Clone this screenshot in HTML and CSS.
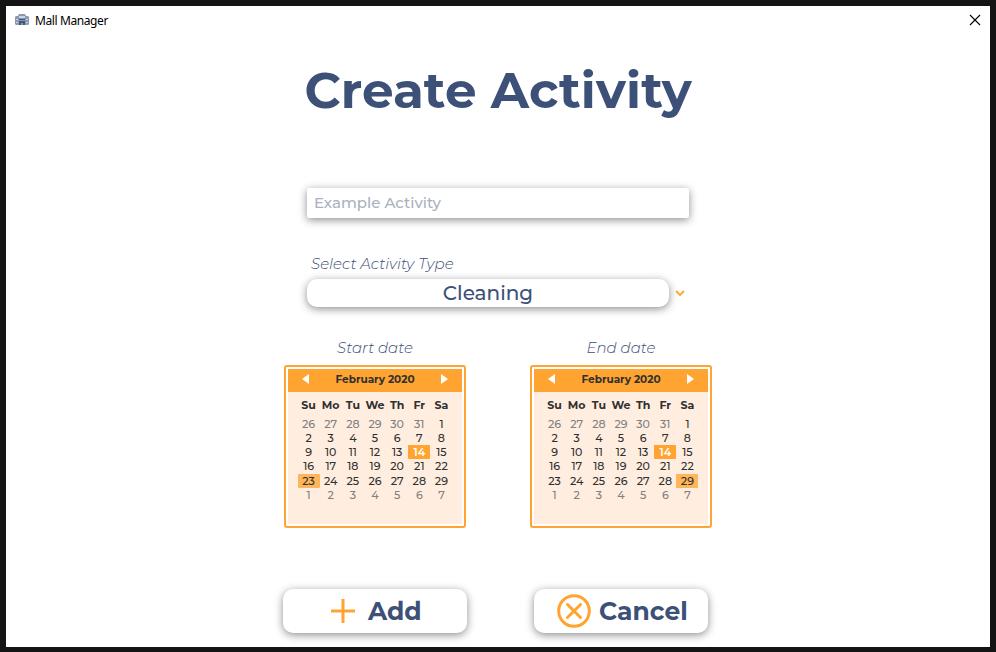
FILE: index.html
```html
<!DOCTYPE html>
<html lang="en">
<head>
<meta charset="utf-8">
<title>Mall Manager</title>
<link rel="stylesheet" href="styles.css">
</head>
<body>
<div class="window">
  <header class="titlebar">
    <svg class="app-icon" width="14" height="12" viewBox="0 0 14 12"><path fill="#8b98b1" d="M0 3l1-1h2l1-2h6l1 2h2l1 1v7l-1 1H1l-1-1z"/><path fill="#c9d5e5" d="M4 2h6v2H4zM1 5h2v1H1zm10 0h2v1h-2zM1 8h2v1H1zm10 0h2v1h-2z"/><path fill="#455779" d="M4 5h6v1H4zm0 2h6v4H8V9H6v2H4z"/></svg>
    <span class="app-name">Mall Manager</span>
    <svg class="close" width="12" height="12" viewBox="0 0 12 12"><path d="M1 1l10 10M11 1L1 11" stroke="#000" stroke-width="1.1"/></svg>
  </header>
  <main class="form">
    <h1 class="heading"><span>Create Activity</span></h1>
    <input class="name-input" type="text" placeholder="Example Activity">
    <div class="label type-label"><span>Select Activity Type</span></div>
    <div class="type-row">
      <div class="select"><span>Cleaning</span></div>
      <svg class="chevron" width="10" height="7" viewBox="0 0 10 7"><path d="M1 1l4 4 4-4" fill="none" stroke="#ffa430" stroke-width="1.8"/></svg>
    </div>
    <div class="dates">
      <section class="date">
        <div class="label start-label"><span>Start date</span></div>
        <div class="calendar" data-selected="23"></div>
      </section>
      <section class="date">
        <div class="label end-label"><span>End date</span></div>
        <div class="calendar" data-selected="29"></div>
      </section>
    </div>
    <div class="actions">
      <button class="button add"><svg width="24" height="24" viewBox="0 0 24 24"><path d="M12 0v24M0 12h24" stroke="#ffa430" stroke-width="3"/></svg><span>Add</span></button>
      <button class="button cancel"><svg width="34" height="34" viewBox="0 0 34 34"><g fill="none" stroke="#ffa430" stroke-width="3"><circle cx="17" cy="17" r="15.3"/><path stroke-linecap="round" d="M10.5 10.5l13 13m0-13l-13 13"/></g></svg><span>Cancel</span></button>
    </div>
  </main>
</div>
<script src="calendar.js"></script>
</body>
</html>
```
FILE: styles.css
```css
* { box-sizing: border-box; }
body {
  margin: 0;
  width: 996px;
  height: 652px;
  padding: 6px 6px 5px;
  background: #141414;
  overflow: hidden;
  font-family: Montserrat, Inter, "Liberation Sans", sans-serif;
  color: #3c5078;
}
.window { height: 641px; background: #fff; overflow: hidden; }
.titlebar { display: flex; align-items: center; height: 28px; padding: 0 9px; }
.app-name {
  margin-left: 6px;
  font: 12px "Noto Sans", "Open Sans", sans-serif;
  letter-spacing: -0.4px;
  color: #000;
}
.close { margin-left: auto; }
.form { display: flex; flex-direction: column; }
.heading {
  margin: 27px 0 0 298.5px;
  height: 60px;
  font-size: 50px;
  line-height: 60px;
  font-weight: 700;
  letter-spacing: 0.1px;
  white-space: nowrap;
}
.name-input {
  width: 382px;
  height: 30px;
  margin: 67px 0 0 301px;
  padding: 0 7px 2px;
  border: 0;
  border-radius: 2px;
  background: #fff;
  box-shadow: 0 2px 8px rgba(0, 0, 0, .45);
  font-family: inherit;
  font-size: 15px;
  font-weight: 500;
}
.name-input::placeholder { color: #aab0c0; opacity: 1; }
.label {
  height: 20px;
  font-size: 15px;
  line-height: 20px;
  font-style: italic;
  font-weight: 300;
  white-space: nowrap;
}
.type-label { margin: 36px 0 0 305px; }
.type-row { display: flex; align-items: center; gap: 6px; margin: 5px 0 0 301px; }
.select {
  width: 362px;
  height: 28px;
  border-radius: 10px;
  box-shadow: 0 2px 8px rgba(0, 0, 0, .45);
  text-align: center;
  font-size: 20px;
  line-height: 28px;
  font-weight: 500;
}
.dates { display: flex; gap: 64px; margin: 31px 0 0 278px; }
.date { width: 182px; }
.date .label { text-align: center; }
.calendar {
  height: 163px;
  margin-top: 7px;
  padding: 2px;
  border: 2px solid #ffa430;
  border-radius: 3px;
  background: #fff;
  color: #303030;
}
.calendar-body { height: 155px; background: #ffeee0; }
.month {
  display: flex;
  align-items: center;
  justify-content: space-between;
  height: 23px;
  padding: 0 14px 3px;
  background: #ffa430;
  font-size: 10.5px;
  font-weight: 700;
}
.weekdays, .days { display: grid; grid-template-columns: repeat(7, 22.15px); justify-content: center; text-align: center; }
.weekdays { padding-top: 5px; font-size: 11px; line-height: 16px; font-weight: 700; }
.days { padding-top: 3.6px; grid-auto-rows: 14.25px; font-size: 11px; line-height: 14.25px; font-weight: 500; }
.days span { border-radius: 1px; }
.days .muted { color: #808080; }
.days .today { background: #ffa430; color: #fff; font-weight: 600; }
.days .selected { background: #ffb65b; }
.actions { display: flex; gap: 67px; margin: 61px 0 0 277px; }
.button {
  display: flex;
  align-items: center;
  height: 44px;
  padding: 0;
  border: 0;
  border-radius: 10px;
  background: #fff;
  box-shadow: 0 2px 8px rgba(0, 0, 0, .45);
  font-family: inherit;
  font-size: 25px;
  font-weight: 700;
  color: #3c5078;
}
.add { width: 184px; padding-left: 48px; gap: 13px; }
.cancel { width: 174px; padding-left: 23px; gap: 8px; }
```
FILE: calendar.js
```js
const weekdays = ["Su", "Mo", "Tu", "We", "Th", "Fr", "Sa"];
document.querySelectorAll(".calendar").forEach(calendar => {
  const selected = Number(calendar.dataset.selected);
  const days = [];
  for (let i = -5; i <= 36; i++) {
    const number = i < 1 ? i + 31 : i > 29 ? i - 29 : i;
    const style = i < 1 || i > 29 ? "muted" : i === 14 ? "today" : i === selected ? "selected" : "";
    days.push(`<span class="${style}">${number}</span>`);
  }
  calendar.innerHTML = `<div class="calendar-body">
    <div class="month"><svg width="7" height="10" viewBox="0 0 7 10"><path d="M7 0v10L0 5z" fill="#fff"/></svg><span>February 2020</span><svg width="7" height="10" viewBox="0 0 7 10"><path d="M0 0v10l7-5z" fill="#fff"/></svg></div>
    <div class="weekdays">${weekdays.map(day => `<span>${day}</span>`).join("")}</div>
    <div class="days">${days.join("")}</div>
  </div>`;
});
```
